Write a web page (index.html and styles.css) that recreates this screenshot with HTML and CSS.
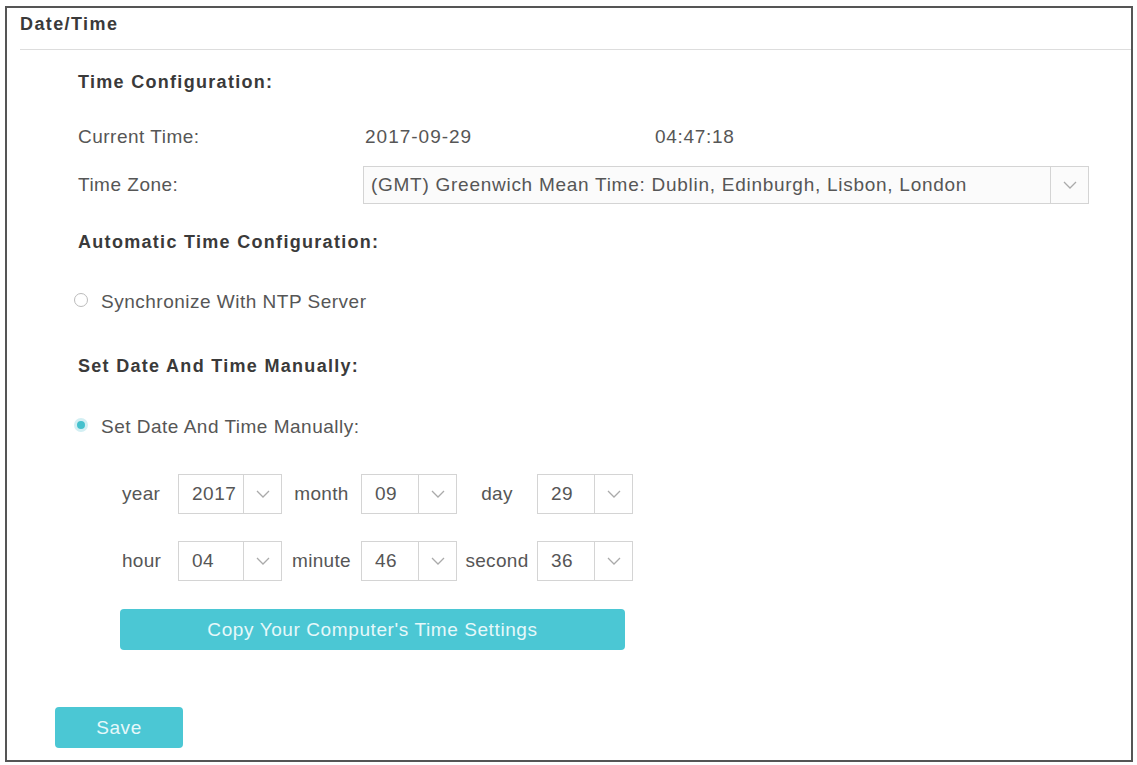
FILE: index.html
```html
<!DOCTYPE html>
<html>
<head>
<meta charset="utf-8">
<link rel="stylesheet" href="styles.css">
</head>
<body>
<div class="frame">
  <div class="header"><span class="title">Date/Time</span></div>
  <div class="content">
    <div class="heading h1">Time Configuration:</div>
    <div class="row current">
      <span class="label">Current Time:</span>
      <span class="date">2017-09-29</span>
      <span class="time">04:47:18</span>
    </div>
    <div class="row tz">
      <span class="label">Time Zone:</span>
      <div class="select wide">
        <span class="val">(GMT) Greenwich Mean Time: Dublin, Edinburgh, Lisbon, London</span>
        <span class="arrow"><svg width="14" height="8" viewBox="0 0 14 8"><path d="M1 1 L7 7 L13 1" fill="none" stroke="#aaa" stroke-width="1.3"/></svg></span>
      </div>
    </div>
    <div class="heading h2">Automatic Time Configuration:</div>
    <div class="row radio-row ntp">
      <span class="radio"></span>
      <span class="rlabel">Synchronize With NTP Server</span>
    </div>
    <div class="heading h3">Set Date And Time Manually:</div>
    <div class="row radio-row manual">
      <span class="radio checked"></span>
      <span class="rlabel">Set Date And Time Manually:</span>
    </div>
    <div class="grid">
      <span class="glabel left">year</span>
      <div class="select s-year"><span class="val">2017</span><span class="arrow"><svg width="14" height="8" viewBox="0 0 14 8"><path d="M1 1 L7 7 L13 1" fill="none" stroke="#aaa" stroke-width="1.3"/></svg></span></div>
      <span class="glabel">month</span>
      <div class="select"><span class="val">09</span><span class="arrow"><svg width="14" height="8" viewBox="0 0 14 8"><path d="M1 1 L7 7 L13 1" fill="none" stroke="#aaa" stroke-width="1.3"/></svg></span></div>
      <span class="glabel">day</span>
      <div class="select"><span class="val">29</span><span class="arrow"><svg width="14" height="8" viewBox="0 0 14 8"><path d="M1 1 L7 7 L13 1" fill="none" stroke="#aaa" stroke-width="1.3"/></svg></span></div>

      <span class="glabel left">hour</span>
      <div class="select s-year"><span class="val">04</span><span class="arrow"><svg width="14" height="8" viewBox="0 0 14 8"><path d="M1 1 L7 7 L13 1" fill="none" stroke="#aaa" stroke-width="1.3"/></svg></span></div>
      <span class="glabel">minute</span>
      <div class="select"><span class="val">46</span><span class="arrow"><svg width="14" height="8" viewBox="0 0 14 8"><path d="M1 1 L7 7 L13 1" fill="none" stroke="#aaa" stroke-width="1.3"/></svg></span></div>
      <span class="glabel">second</span>
      <div class="select"><span class="val">36</span><span class="arrow"><svg width="14" height="8" viewBox="0 0 14 8"><path d="M1 1 L7 7 L13 1" fill="none" stroke="#aaa" stroke-width="1.3"/></svg></span></div>
    </div>
    <button class="btn copy">Copy Your Computer's Time Settings</button>
  </div>
  <button class="btn save">Save</button>
</div>
</body>
</html>
```

FILE: styles.css
```css
html, body {
  margin: 0;
  padding: 0;
  background: #ffffff;
}
body {
  font-family: "Liberation Sans", Arial, sans-serif;
  color: #565656;
  font-size: 19px;
}
.frame {
  box-sizing: border-box;
  margin: 6px 4px 0 5px;
  width: 1128px;
  height: 756px;
  border: 2px solid #555;
  display: flex;
  flex-direction: column;
}
.header {
  height: 41px;
  margin-left: 13px;
  border-bottom: 1px solid #ddd;
  display: flex;
  align-items: center;
}
.title {
  font-weight: bold;
  font-size: 18px;
  color: #3a3a3a;
  margin-top: -8px;
  letter-spacing: 1.4px;
}
.content {
  padding-left: 71px;
  display: flex;
  flex-direction: column;
}
.heading {
  font-weight: bold;
  color: #3a3a3a;
  font-size: 18px;
  letter-spacing: 1.3px;
  display: flex;
  align-items: center;
}
.h1 { height: 64px; }
.h2 { height: 64px; }
.h3 { height: 72px; }
.row {
  display: flex;
  align-items: center;
}
.current { height: 46px; }
.tz { height: 50px; }
.label {
  width: 285px;
  letter-spacing: 0.5px;
}
.date { width: 290px; padding-left: 2px; letter-spacing: 1px; }
.time { letter-spacing: 0.7px; }
.select {
  box-sizing: border-box;
  height: 40px;
  border: 1px solid #d4d4d4;
  display: flex;
  align-items: stretch;
  background: #fff;
}
.select .val {
  flex: 1;
  display: flex;
  align-items: center;
  padding-left: 13px;
  letter-spacing: 0.5px;
}
.select .arrow {
  width: 37px;
  border-left: 1px solid #d4d4d4;
  display: flex;
  align-items: center;
  justify-content: center;
}
.select.wide {
  width: 726px;
  height: 38px;
  background: #fbfbfb;
}
.select.wide .val { padding-left: 7px; letter-spacing: 0.73px; }
.radio-row { margin-left: -4px; }
.ntp { height: 56px; }
.manual { height: 50px; }
.radio {
  box-sizing: border-box;
  width: 14px;
  height: 14px;
  border-radius: 50%;
  border: 1.5px solid #bbb;
  margin-right: 13px;
  margin-top: -4px;
}
.radio.checked {
  border: 3px solid #d3eff3;
  background: #45c1cd;
}
.rlabel { letter-spacing: 0.5px; }
.grid {
  margin-top: 22px;
  margin-left: 44px;
  display: grid;
  grid-template-columns: 56px 104px 79px 96px 80px 96px;
  grid-auto-rows: 40px;
  row-gap: 27px;
  align-items: center;
}
.glabel {
  text-align: center;
  letter-spacing: 0.3px;
}
.glabel.left { text-align: left; }
.btn {
  border: none;
  border-radius: 4px;
  background: #4bc7d4;
  color: #e6f8fa;
  font-family: "Liberation Sans", Arial, sans-serif;
  font-size: 19px;
  letter-spacing: 0.6px;
  padding: 0;
}
.copy {
  margin-top: 28px;
  margin-left: 42px;
  width: 505px;
  height: 41px;
}
.save {
  margin-top: 57px;
  margin-left: 48px;
  width: 128px;
  height: 41px;
}
```
